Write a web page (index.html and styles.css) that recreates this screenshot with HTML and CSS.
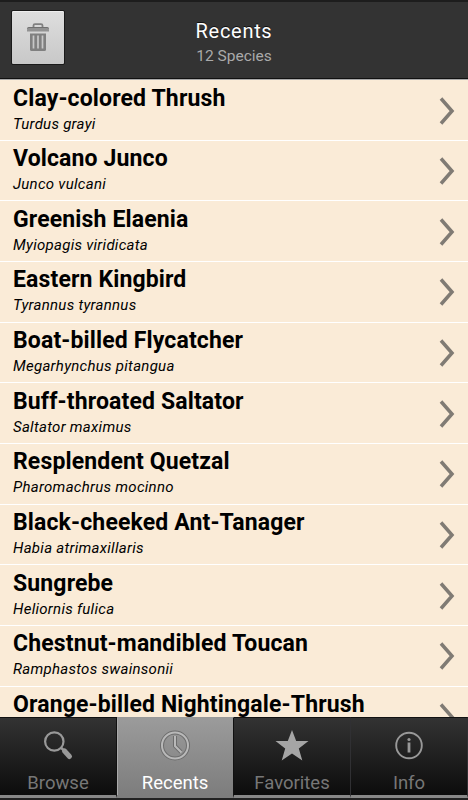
FILE: index.html
```
<!DOCTYPE html>
<html lang="en">
<head>
    <meta charset="UTF-8">
    <meta name="viewport" content="width=device-width, initial-scale=1.0">
    <title>Recents</title>
    <link rel="stylesheet" href="styles.css">
</head>
<body>

    <header class="header">
        <button class="trash" aria-label="Clear">
            <svg width="22" height="28" viewBox="0 0 22 28">
                <path d="M6.5 4.5V2.6Q6.5 1.2 8 1.2h6Q15.5 1.2 15.5 2.6V4.5" fill="none" stroke="#808080" stroke-width="1.8"/>
                <path d="M0 8.5V6.5Q0 4.5 2 4.5H20Q22 4.5 22 6.5V8.500Z" fill="#929292"/>
                <path d="M0 5.500Q1 4.500 2 4.500H20Q21 4.500 22 5.500" fill="none" stroke="#707070"/>
                <path d="M3 10.500H19V26.500Q19 28 17.500 28H4.500Q3 28 3 26.500Z" fill="#808080"/>
                <path d="M6.500 12.500V25.500M11 12.500V25.500M15.500 12.500V25.500" stroke="#c8c8c8" stroke-width="1.700"/>
            </svg>
        </button>
        <div class="heading">
            <h1>Recents</h1>
            <p>12 Species</p>
        </div>
    </header>

    <ul class="list">
        <li class="row"><div><h2>Clay-colored Thrush</h2><p>Turdus grayi</p></div><svg class="chevron" viewBox="0 0 16 28"><path d="M2 1.500L13 14L2 26.500"/></svg></li>
        <li class="row"><div><h2>Volcano Junco</h2><p>Junco vulcani</p></div><svg class="chevron" viewBox="0 0 16 28"><path d="M2 1.500L13 14L2 26.500"/></svg></li>
        <li class="row"><div><h2>Greenish Elaenia</h2><p>Myiopagis viridicata</p></div><svg class="chevron" viewBox="0 0 16 28"><path d="M2 1.500L13 14L2 26.500"/></svg></li>
        <li class="row"><div><h2>Eastern Kingbird</h2><p>Tyrannus tyrannus</p></div><svg class="chevron" viewBox="0 0 16 28"><path d="M2 1.500L13 14L2 26.500"/></svg></li>
        <li class="row"><div><h2>Boat-billed Flycatcher</h2><p>Megarhynchus pitangua</p></div><svg class="chevron" viewBox="0 0 16 28"><path d="M2 1.500L13 14L2 26.500"/></svg></li>
        <li class="row"><div><h2>Buff-throated Saltator</h2><p>Saltator maximus</p></div><svg class="chevron" viewBox="0 0 16 28"><path d="M2 1.500L13 14L2 26.500"/></svg></li>
        <li class="row"><div><h2>Resplendent Quetzal</h2><p>Pharomachrus mocinno</p></div><svg class="chevron" viewBox="0 0 16 28"><path d="M2 1.500L13 14L2 26.500"/></svg></li>
        <li class="row"><div><h2>Black-cheeked Ant-Tanager</h2><p>Habia atrimaxillaris</p></div><svg class="chevron" viewBox="0 0 16 28"><path d="M2 1.500L13 14L2 26.500"/></svg></li>
        <li class="row"><div><h2>Sungrebe</h2><p>Heliornis fulica</p></div><svg class="chevron" viewBox="0 0 16 28"><path d="M2 1.500L13 14L2 26.500"/></svg></li>
        <li class="row"><div><h2>Chestnut-mandibled Toucan</h2><p>Ramphastos swainsonii</p></div><svg class="chevron" viewBox="0 0 16 28"><path d="M2 1.500L13 14L2 26.500"/></svg></li>
        <li class="row"><div><h2>Orange-billed Nightingale-Thrush</h2></div><svg class="chevron" viewBox="0 0 16 28"><path d="M2 1.500L13 14L2 26.500"/></svg></li>
    </ul>

    <nav class="tabs">
        <a class="tab">
            <svg width="32" height="32" viewBox="0 0 32 32">
                <circle cx="12.300" cy="12.500" r="9.200" fill="none" stroke="#999" stroke-width="2.200"/>
                <path d="M18.800 18.500L22 21.500" stroke="#999" stroke-width="2.500"/>
                <path d="M22.500 22L27.500 27.500" stroke="#999" stroke-width="5" stroke-linecap="round"/>
            </svg>
            <span>Browse</span>
        </a>
        <a class="tab active">
            <svg width="32" height="32" viewBox="0 0 32 32">
                <circle cx="16" cy="16.500" r="13" fill="none" stroke="#6d6d6d" stroke-width="4"/>
                <path d="M16 7V17L22 23" fill="none" stroke="#6d6d6d" stroke-width="4"/>
                <circle cx="16" cy="16.500" r="13" fill="none" stroke="#b9b9b9" stroke-width="2"/>
                <path d="M16 7V17L22.500 23.500" fill="none" stroke="#b9b9b9" stroke-width="2"/>
            </svg>
            <span>Recents</span>
        </a>
        <a class="tab">
            <svg width="34" height="32" viewBox="0 0 34 32">
                <path d="M17 1L21.200 12H33.500L23.800 19.600L27.300 31.500L17 24.500L6.700 31.500L10.200 19.600L0.500 12H12.800Z" fill="#a5a5a5"/>
            </svg>
            <span>Favorites</span>
        </a>
        <a class="tab">
            <svg width="32" height="32" viewBox="0 0 32 32">
                <circle cx="16" cy="16.500" r="12.800" fill="none" stroke="#999" stroke-width="1.900"/>
                <path d="M16 13.500V23.500" stroke="#999" stroke-width="2.800"/>
                <circle cx="16" cy="10.500" r="1.600" fill="#999"/>
            </svg>
            <span>Info</span>
        </a>
    </nav>

</body>
</html>
```
FILE: styles.css
```
* {
    box-sizing: border-box;
}

body {
    margin: 0;
    height: 800px;
    display: flex;
    flex-direction: column;
    overflow: hidden;
    background: #faebd7;
    font-family: Roboto, sans-serif;
}

h1, h2, p, ul {
    margin: 0;
    padding: 0;
    font-weight: 400;
}

.header {
    flex: none;
    height: 80px;
    display: grid;
    grid-template-columns: 76px 1fr 76px;
    align-items: start;
    background: #333;
    border-top: 2px solid #1d1d1d;
    border-bottom: 1px solid #aaa;
    box-shadow: inset 0 -1px #111;
}

.trash {
    width: 54px;
    height: 55px;
    margin: 8px 0 0 11px;
    padding: 0 0 2px;
    display: flex;
    align-items: center;
    justify-content: center;
    background: linear-gradient(#dedede, #c8c8c8);
    border: 1px solid #1a1a1a;
    border-radius: 2px;
    box-shadow: inset 0 1px #eee;
}

.heading {
    padding-top: 16px;
    text-align: center;
}

.heading h1 {
    font-size: 20px;
    line-height: 26px;
    letter-spacing: 0.7px;
    color: #fff;
    text-shadow: 0 -1px #111;
}

.heading p {
    font-size: 15.5px;
    line-height: 25px;
    color: #aaa;
}

.list {
    flex: 1;
    min-height: 0;
    overflow: hidden;
    list-style: none;
}

.row {
    height: 60.67px;
    padding: 4.5px 13px 0;
    display: flex;
    justify-content: space-between;
    border-bottom: 1px solid #fff;
}

.row h2 {
    font-size: 23px;
    line-height: 28px;
    font-weight: 700;
    letter-spacing: 0.14px;
    color: #000;
    white-space: nowrap;
}

.row p {
    font-size: 15px;
    line-height: 23px;
    letter-spacing: 0.28px;
    font-style: italic;
    color: #000;
}

.chevron {
    flex: none;
    width: 16px;
    height: 28px;
    margin-top: 12px;
}

.chevron path {
    fill: none;
    stroke: #807b74;
    stroke-width: 3.5;
}

.tabs {
    flex: none;
    height: 83px;
    display: flex;
    background: #111;
    border-bottom: 2px solid #222;
}

.tab {
    flex: 1;
    display: flex;
    flex-direction: column;
    align-items: center;
    padding-top: 11px;
    background: linear-gradient(#333, #0c0c0c);
    border-top: 1px solid #111;
    border-right: 1px solid #303033;
    border-bottom: 3px solid #888;
    color: #777;
    font-size: 18.5px;
}

.tab:first-child {
    border-right-color: #111;
}

.tab span {
    line-height: 24px;
    margin-top: 10px;
}

.tab.active {
    background: linear-gradient(#9b9b9b, #7d7d7d);
    border-top-color: #999;
    border-bottom-color: #7d7d7d;
    border-right-color: #111;
    box-shadow: inset 1px 0 #aaa;
    color: #fff;
}
```
